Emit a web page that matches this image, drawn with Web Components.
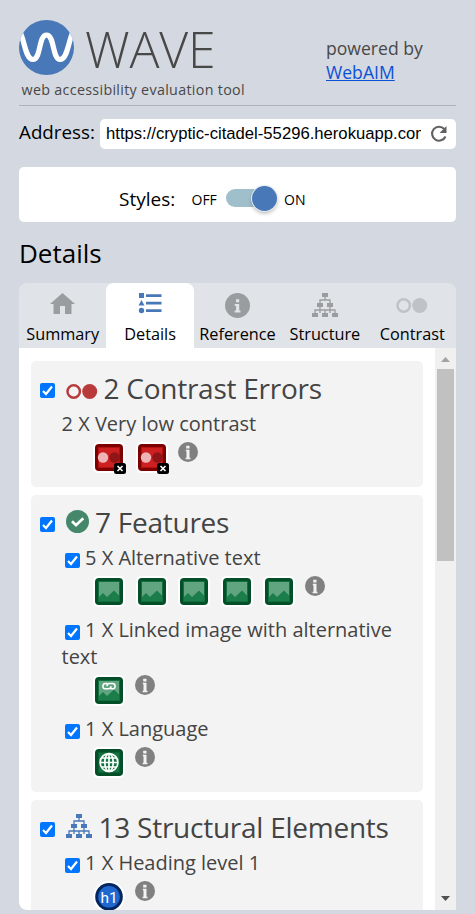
<!DOCTYPE html>
<html lang="en">
<head>
<meta charset="utf-8">
<title>WAVE</title>
<style>
html,body{margin:0;height:914px;overflow:hidden;background:#d4d8e0}
body{font-family:"Open Sans","Noto Sans",sans-serif;color:#000}
</style>
</head>
<body>
<wave-app></wave-app>
<script>
const define = (name, html) => customElements.define(name, class extends HTMLElement {
  connectedCallback() {
    if (this.shadowRoot) return;
    const root = this.attachShadow({mode: 'open'});
    const t = document.createElement('template');
    t.innerHTML = typeof html === 'function' ? html(this) : html;
    root.append(t.content.cloneNode(true));
  }
});

const tree = `<path d="M10 0h6v4h-6zM5 10h6v4H5zM15 10h6v4h-6zM0 20h6v4H0zM10 20h6v4h-6zM20 20h6v4h-6z" fill="currentColor"/><path d="M13 4v3M8 10V7h10v3M8 14v6M18 14v6M3 20v-3h20v3M13 17v3" fill="none" stroke="currentColor" stroke-width="1.3"/>`;
const rings = `<circle cx="7.7" cy="7.5" r="6.2" fill="none" stroke="currentColor" stroke-width="2.5"/><circle cx="23.7" cy="7.5" r="7.5" fill="currentColor"/>`;
const tile = (edge, mid, fill, inner) => `<rect width="32" height="31" rx="5" fill="#fff"/><rect x="2" y="2" width="28" height="27" rx="4" fill="${edge}"/><rect x="5" y="5" width="22" height="21" fill="${mid}"/><rect x="6" y="6" width="20" height="19" fill="${fill}"/>${inner}`;
const hills = `<path d="M6 21l4-4 4 4 7-6.5 5 5V25H6z" fill="#1b7d49"/>`;
const icons = {
  home: [25, 21, `<path d="M12.5 0L25 11h-3.5v10H15v-8h-5v8H3.500V11H0z" fill="currentColor"/>`],
  list: [24, 21, `<path d="M1 0h5v5H1zM3.500 7l3 5.500H.5zM8 1.200h15.500v2.800H8zM8 8.700h15.500v2.800H8zM8 16.200h15.500V19H8z" fill="currentColor"/><circle cx="3.500" cy="17.500" r="2.700" fill="currentColor"/>`],
  ref: [25, 25, `<circle cx="12.500" cy="12.500" r="12.500" fill="currentColor"/><path d="M11 6.200h3.200v3H11zM9.800 11h4.400v6.500h1.300v2H9.600v-2h1.500V13H9.800z" fill="#e0e3e8"/>`],
  tree: [26, 24, tree],
  rings: [32, 15, rings],
  check: [23, 23, `<circle cx="11.500" cy="11.500" r="11.500" fill="#45876a"/><path d="M6 11.300l4 3.900 7.300-7" fill="none" stroke="#fff" stroke-width="2.700"/>`],
  info: [20, 20, `<circle cx="10" cy="10" r="10" fill="#808080"/><path d="M8.200 3.800h3.300v2.600H8.200zM7.800 7.800h3.700v7.900h1v1.500H7.600v-1.500h.9V9.300h-.7z" fill="#f3f3f3"/>`],
  low: [34, 34, tile('#7c0000', '#b3110f', '#cd2121', `<circle cx="10" cy="15.500" r="5.200" fill="#efb4b6"/><circle cx="21.500" cy="15.500" r="5.200" fill="#8f1517"/><rect x="21" y="21" width="12" height="11" rx="2.500" fill="#000"/><path d="M24.500 24l5 5M29.500 24l-5 5" stroke="#fff" stroke-width="1.600"/>`)],
  alt: [32, 31, tile('#034f27', '#12703f', '#60a580', hills)],
  linked: [32, 31, tile('#034f27', '#12703f', '#60a580', hills + `<path d="M14.500 8.600H12.500a2.600 2.600 0 000 5.200h3a2.600 2.600 0 002.500-2.600M17.500 13.800h2a2.600 2.600 0 000-5.200h-3a2.600 2.600 0 00-2.500 2.600" fill="none" stroke="#fff" stroke-width="1.500"/>`)],
  globe: [32, 31, tile('#034f27', '#0f5f35', '#117442', `<g fill="none" stroke="#fff" stroke-width="1.700"><circle cx="16" cy="15.500" r="8.900"/><ellipse cx="16" cy="15.500" rx="4.200" ry="8.900"/><path d="M16 6.500v18M7 15.500h18M8.500 11h15M8.500 20h15"/></g>`)],
  h1: [32, 31, `<circle cx="16" cy="15.800" r="15.800" fill="#fff"/><circle cx="16" cy="15.800" r="13.800" fill="#03265e"/><circle cx="16" cy="15.800" r="10.800" fill="#1f68d0"/><text x="16" y="21.500" text-anchor="middle" font-family="Roboto,sans-serif" font-size="15.500" fill="#fff">h1</text>`],
  reload: [18, 18, `<path d="M14.300 4A7 7 0 1015.500 11.500" fill="none" stroke="#616161" stroke-width="2.100"/><path d="M16.500 1v7h-7z" fill="#616161"/>`],
};
define('wave-icon', el => {
  const [w, h, art] = icons[el.getAttribute('name')];
  return `<style>:host{display:inline-block;width:${w}px;height:${h}px;flex:none}svg{display:block}</style><svg width="${w}" height="${h}" viewBox="0 0 ${w} ${h}">${art}</svg>`;
});
define('check-box', `<style>:host{display:inline-block;width:15px;height:15px;flex:none}svg{display:block}</style><svg width="15" height="15"><rect width="15" height="15" rx="2" fill="#0075ff"/><path d="M3 8l3 3 6-7.500" fill="none" stroke="#fff" stroke-width="2.200"/></svg>`);

define('wave-header', `<style>
:host{display:flex;justify-content:space-between;border-bottom:1px solid #b0b4ba;box-sizing:border-box;height:106px;color:#484848}
.brand{display:flex;flex-direction:column;padding-top:20px}
.row{display:flex;height:55px;gap:11px}
.name{font-size:50px;font-weight:300;line-height:58px;letter-spacing:-.2px;white-space:nowrap}
.tag{font-size:14.300px;letter-spacing:.31px;line-height:20px;padding:5px 0 0 2.500px;white-space:nowrap}
.by{padding:36px 0 0;width:130px;font-size:17.600px;line-height:24px}
a{color:#0b51d6;text-decoration:underline}
</style>
<div class="brand"><div class="row"><svg width="55" height="55" viewBox="0 0 55 55"><defs><clipPath id="c"><circle cx="27.500" cy="27.500" r="27.500"/></clipPath></defs><circle cx="27.500" cy="27.500" r="27.500" fill="#4878b8"/><path clip-path="url(#c)" d="M1 12C6 22 6.500 39.500 14 39.500C22 39.500 19.500 15 27.500 15C35.500 15 33.500 39.500 41 39.500C48.500 39.500 49 22 54 12" fill="none" stroke="#fff" stroke-width="5.200"/></svg><span class="name">WAVE</span></div>
<div class="tag">web accessibility evaluation tool</div></div>
<div class="by">powered by<br><a>WebAIM</a></div>`);

define('address-bar', `<style>
:host{display:flex;height:30px;margin-top:13px;justify-content:space-between}
label{font-size:18.800px;line-height:26px;white-space:nowrap}
.field{width:356px;box-sizing:border-box;background:#fff;border-radius:5px;display:flex;align-items:center;padding:0 8px 0 6px;justify-content:space-between}
.url{font:16.670px/20px "Liberation Sans",Arial,sans-serif;width:314.500px;overflow:hidden;white-space:nowrap;height:20px;margin-top:-1px}
</style><label>Address:</label><div class="field"><span class="url">https://cryptic-citadel-55296.herokuapp.com/</span><wave-icon name="reload"></wave-icon></div>`);

define('styles-toggle', `<style>
:host{display:flex;height:55px;margin-top:18px;background:#fff;border-radius:5px;box-sizing:border-box;padding-left:100px;align-items:center;font-size:14px}
span{white-space:nowrap;line-height:24px}
.l{font-size:19px;width:72.500px;padding-top:9px}.off{width:34.500px;padding-top:10px}
.t{width:46px;height:18px;border-radius:9px;background:#9fc0ca;display:flex;justify-content:flex-end;align-items:center;margin-top:7px}
i{width:25px;height:25px;border-radius:50%;background:#4878b8;flex:none;margin-right:-5px;box-shadow:0 0 0 1px #e6ebf2,0 2px 4px #0005}
.on{padding:10px 0 0 12px}
</style><span class="l">Styles:</span><span class="off">OFF</span><div class="t"><i></i></div><span class="on">ON</span>`);

define('wave-tab', `<style>
:host{display:flex;flex-direction:column;align-items:center;font-size:16.300px;line-height:22px;color:#9a9d9f}
:host([active]){background:#fff;border-radius:8px 8px 0 0;color:#4878b8}
:host([faint]){color:#bfc2c6}
.i{height:40px;display:flex;align-items:flex-start;padding-top:10px;box-sizing:border-box}
:host([faint]) .i{padding-top:15px}
.t{color:#000;white-space:nowrap}
</style><div class="i"><slot name="icon"></slot></div><div class="t"><slot></slot></div>`);

define('detail-item', `<style>
:host{display:block;padding:0 8px 0 30.500px;font-size:20px;line-height:27px}
.icons{display:flex;align-items:flex-start;height:45px;padding:5px 0 0 31.500px;box-sizing:border-box;gap:10.500px}
::slotted([name=low]){margin-right:-2px}
.icons>wave-icon{margin-left:-.4px}
</style><div><slot name="check"></slot><slot></slot></div><div class="icons"><slot name="icons"></slot><wave-icon name="info"></wave-icon></div>`);

define('detail-group', `<style>
:host{display:block;background:#f3f3f3;border-radius:5px;padding-bottom:5px;color:#444}
.head{height:49px;display:flex;box-sizing:border-box;padding:8px 0 0 9px;font-size:28px;letter-spacing:-.25px;line-height:38px;white-space:nowrap}
check-box{margin:14px 11px 0 0}
</style><div class="head"><check-box></check-box><slot name="icon"></slot><slot name="title"></slot></div><slot></slot>`);

define('scroll-bar', `<style>
:host{display:flex;flex-direction:column;width:21px;background:#f0f0f0;align-items:center;justify-content:space-between}
.top{display:flex;flex-direction:column;align-items:center}
.b{width:17px;height:192px;background:#c1c1c1}
svg{display:block}
</style><div class="top"><svg width="21" height="21"><path d="M6 14h9l-4.500-5z" fill="#a3a3a3"/></svg><div class="b"></div></div><svg width="21" height="21"><path d="M6 7h9l-4.500 5z" fill="#505050"/></svg>`);

define('wave-app', `<style>
:host{display:flex;flex-direction:column;height:914px;box-sizing:border-box;padding:0 19px 4px}
h2{margin:0;font-size:26px;font-weight:400;line-height:35px;padding-top:14px;height:61px;box-sizing:border-box}
.tabs{display:grid;grid-template-columns:repeat(5,1fr);height:65px;flex:none;background:#e0e3e8;border-radius:8px 8px 0 0}
.panel{display:flex;height:562px;background:#fff;overflow:hidden;border-radius:0 0 0 8px}
.list{flex:1;padding:13px 12px 0;display:flex;flex-direction:column;gap:8px;overflow:hidden;box-sizing:border-box}
detail-group{flex:none}
check-box{margin:0 5px 0 3.500px;vertical-align:-3px}
.red{color:#b93a3b;margin:15px 5.500px 0 0}.chk{margin:7px 6px 0 0}.blue{color:#4878b8;margin:6px 6.500px 0 0}
</style>
<wave-header></wave-header>
<address-bar></address-bar>
<styles-toggle></styles-toggle>
<h2>Details</h2>
<div class="tabs">
<wave-tab><wave-icon slot="icon" name="home"></wave-icon>Summary</wave-tab>
<wave-tab active><wave-icon slot="icon" name="list"></wave-icon>Details</wave-tab>
<wave-tab><wave-icon slot="icon" name="ref"></wave-icon>Reference</wave-tab>
<wave-tab><wave-icon slot="icon" name="tree"></wave-icon>Structure</wave-tab>
<wave-tab faint><wave-icon slot="icon" name="rings"></wave-icon>Contrast</wave-tab>
</div>
<div class="panel"><div class="list">
<detail-group><wave-icon slot="icon" class="red" name="rings"></wave-icon><span slot="title">2 Contrast Errors</span>
<detail-item>2 X Very low contrast<wave-icon slot="icons" name="low"></wave-icon><wave-icon slot="icons" name="low"></wave-icon></detail-item></detail-group>
<detail-group><wave-icon slot="icon" class="chk" name="check"></wave-icon><span slot="title">7 Features</span>
<detail-item><check-box slot="check"></check-box>5 X Alternative text<wave-icon slot="icons" name="alt"></wave-icon><wave-icon slot="icons" name="alt"></wave-icon><wave-icon slot="icons" name="alt"></wave-icon><wave-icon slot="icons" name="alt"></wave-icon><wave-icon slot="icons" name="alt"></wave-icon></detail-item>
<detail-item><check-box slot="check"></check-box>1 X Linked image with alternative text<wave-icon slot="icons" name="linked"></wave-icon></detail-item>
<detail-item><check-box slot="check"></check-box>1 X Language<wave-icon slot="icons" name="globe"></wave-icon></detail-item></detail-group>
<detail-group><wave-icon slot="icon" class="blue" name="tree"></wave-icon><span slot="title">13 Structural Elements</span>
<detail-item><check-box slot="check"></check-box>1 X Heading level 1<wave-icon slot="icons" name="h1"></wave-icon></detail-item></detail-group>
</div><scroll-bar></scroll-bar></div>`);
</script>
</body>
</html>
